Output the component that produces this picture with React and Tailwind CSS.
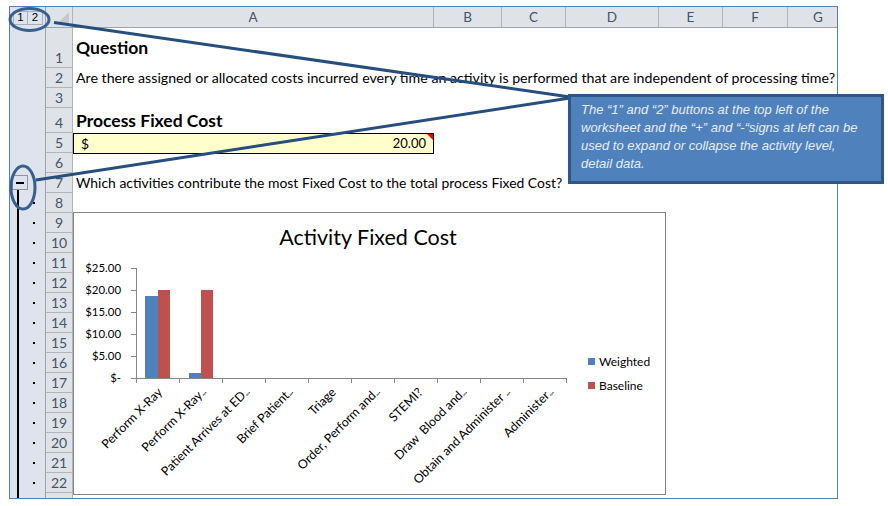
import React from "react";

const columns = [
  { label: "A", width: "w-[361px]" },
  { label: "B", width: "w-[68px]" },
  { label: "C", width: "w-[64px]" },
  { label: "D", width: "w-[93px]" },
  { label: "E", width: "w-[64px]" },
  { label: "F", width: "w-[65px]" },
  { label: "G", width: "w-[49px] pl-[11px]" },
];

const rows = [
  { n: 1, h: "h-[40px]" },
  { n: 2, h: "h-[20px]" },
  { n: 3, h: "h-[20px]" },
  { n: 4, h: "h-[25px]" },
  { n: 5, h: "h-[20px]" },
  { n: 6, h: "h-[20px]" },
  { n: 7, h: "h-[20px]" },
  { n: 8, h: "h-[20px]" },
  ...Array.from({ length: 14 }, (_, i) => ({ n: i + 9, h: "h-[20px]" })),
  { n: "", h: "h-[20px]" },
];

const labels = [
  { text: "Perform X-Ray", dots: false },
  { text: "Perform X-Ray", dots: true },
  { text: "Patient Arrives at ED", dots: true },
  { text: "Brief Patient", dots: true },
  { text: "Triage", dots: false },
  { text: "Order, Perform and", dots: true },
  { text: "STEMI?", dots: false },
  { text: "Draw  Blood and", dots: true },
  { text: "Obtain and Administer ", dots: true },
  { text: "Administer", dots: true },
];

const ticks = ["$25.00", "$20.00", "$15.00", "$10.00", "$5.00", "$-"];

const Chart = () => {
  return (
    <svg width="593" height="283" className="absolute left-[63px] top-[205px] bg-white border border-[#868686] box-border" style={{ fontFamily: "Lato, sans-serif" }}>
      <g transform="translate(-1 -1)">
        <text x="295" y="33" textAnchor="middle" fontSize="21.5" fill="#000">Activity Fixed Cost</text>
        <path d="M63.5 56V166.5M58 56.5h5M58 78.5h5M58 100.5h5M58 122.5h5M58 144.5h5M58 166.5h5M63 166.5h431" stroke="#868686" fill="none" />
        {[63.5, 106.5, 149.5, 192.5, 235.5, 278.5, 321.5, 364.5, 407.5, 450.5, 493.5].map((x) => (
          <path key={x} d="M0 166v5" transform={`translate(${x} 0)`} stroke="#868686" />
        ))}
        {ticks.map((t, i) => (
          <text key={t} x="48" y={60 + i * 22} textAnchor="end" fontSize="11.4" fill="#000">{t}</text>
        ))}
        <rect x="72" y="84" width="13" height="82" fill="#4f81bd" />
        <rect x="85" y="78" width="12" height="88" fill="#c0504d" />
        <rect x="116" y="161" width="12" height="5" fill="#4f81bd" />
        <rect x="128" y="78" width="12" height="88" fill="#c0504d" />
        {labels.map((l, i) => (
          <text key={i} fontSize="12.4" fill="#000" textAnchor="end" transform={`translate(${90 + i * 43.4} 181) rotate(-45)`} xmlSpace="preserve">
            {l.text}
            {l.dots && <tspan fontSize="10" letterSpacing="-0.8">...</tspan>}
          </text>
        ))}
        <rect x="515" y="146" width="7" height="7" fill="#4f81bd" />
        <text x="526" y="154" fontSize="12" fill="#000">Weighted</text>
        <rect x="515" y="170" width="7" height="7" fill="#c0504d" />
        <text x="526" y="178" fontSize="12" fill="#000">Baseline</text>
      </g>
    </svg>
  );
};

const App = () => {
  return (
    <div className="relative w-[888px] h-[506px] bg-white overflow-hidden pt-[6px] pl-[9px] font-['Lato',sans-serif] text-[13.92px] text-black">
      <div className="relative flex w-[829px] h-[493px] border border-[#4f81bd] overflow-hidden">
        {/* outline gutter */}
        <div className="flex flex-col w-[36px] shrink-0 bg-[#dee3ee] border-r border-[#9fa4ab]">
          <div className="flex h-[21px] shrink-0 items-center pl-[3px] bg-[#dee3ee] font-['Liberation_Sans',sans-serif] text-[11.5px]">
            <span className="flex items-center justify-center w-[15px] h-[14px] border border-[#a9afb8]">1</span>
            <span className="flex items-center justify-center w-[15px] h-[14px] border border-[#a9afb8] border-l-0">2</span>
          </div>
          <div className="relative flex-1">
            {rows.map((r) => (
              <div key={r.n} className={`${r.h} flex items-center justify-end pr-[10px]`}>
                {r.n >= 8 && r.n <= 22 && <span className="w-[2px] h-[2px] bg-black" />}
              </div>
            ))}
            <div className="absolute left-[7px] top-[160px] w-[2px] h-[330px] bg-black" />
            <div className="absolute left-[2px] top-[147px] flex items-center justify-center w-[16px] h-[15px] bg-[#dee3ee] border border-[#8f959c]">
              <span className="w-[8px] h-[2px] bg-black" />
            </div>
          </div>
        </div>

        <div className="flex-1 flex flex-col">
          {/* column headers */}
          <div className="flex h-[21px] shrink-0 bg-[#dfe3e8] border-b border-[#9fa4ab] text-[#44546a] text-[13.5px]">
            <div className="w-[27px] shrink-0 border-r border-[#b1b5ba] flex items-end justify-end p-[3px]">
              <span className="w-0 h-0 border-l-[12px] border-l-transparent border-b-[12px] border-b-[#c5c9ce]" />
            </div>
            {columns.map((c) => (
              <div key={c.label} className={`${c.width} shrink-0 flex items-center justify-center border-r border-[#b1b5ba] last:border-r-0`}>
                {c.label}
              </div>
            ))}
          </div>

          {rows.map((r) => (
            <div key={r.n} className={`${r.h} flex shrink-0`}>
              <div className="w-[27px] shrink-0 bg-[#dfe3e8] border-r border-b border-[#b1b5ba] text-[#44546a] text-[14px] flex items-end justify-center leading-[19px]">
                {r.n}
              </div>
              <div className="flex-1 flex items-end pl-[3px] pb-[1px] whitespace-nowrap leading-[19px]">
                {r.n === 1 && <b className="-mb-[1px] text-[17.5px] leading-[40px]">Question</b>}
                {r.n === 2 && <span className="text-[14.2px]">Are there assigned or allocated costs incurred every time an activity is performed that are independent of processing time?</span>}
                {r.n === 4 && <b className="-mb-[1px] text-[17.5px] leading-[24px]">Process Fixed Cost</b>}
                {r.n === 5 && (
                  <div className="relative flex justify-between items-center w-[361px] h-[21px] -ml-[3px] -mb-[2px] px-[7px] pb-[1px] bg-[#ffffcc] border border-black">
                    <span>$</span>
                    <span className="text-[13px]">20.00</span>
                    <span className="absolute right-0 top-0 w-0 h-0 border-l-[6px] border-l-transparent border-t-[6px] border-t-[#ff0000]" />
                  </div>
                )}
                {r.n === 7 && "Which activities contribute the most Fixed Cost to the total process Fixed Cost?"}
              </div>
            </div>
          ))}
        </div>

        <Chart />
      </div>

      {/* callout leader lines and rings */}
      <svg width="888" height="506" className="absolute left-0 top-0 pointer-events-none">
        <path d="M54 22.5L570 97M36 180L570 98" stroke="#264f80" strokeWidth="3" fill="none" />
        <ellipse cx="29.5" cy="19.5" rx="19.5" ry="11" stroke="#38608f" strokeWidth="3" fill="none" />
        <ellipse cx="23" cy="187.5" rx="12" ry="21.5" stroke="#38608f" strokeWidth="3" fill="none" />
      </svg>

      <div className="absolute left-[568px] top-[94px] w-[316px] h-[90px] bg-[#4f81bd] border-[3px] border-[#2f5786] pl-[10px] pt-[4px] font-['Liberation_Sans',sans-serif] italic text-[13px] leading-[18px] text-[#e6edf6] whitespace-nowrap">
        The “1” and “2” buttons at the top left of the<br />
        worksheet and the “+” and “-“signs at left can be<br />
        used to expand or collapse the activity level,<br />
        detail data.
      </div>
    </div>
  );
};

export default App;
